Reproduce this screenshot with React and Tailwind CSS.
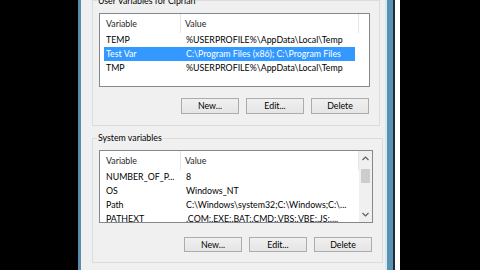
import React from 'react';

const font = { fontFamily: 'Lato, "Open Sans", sans-serif' };

function Header() {
  return (
    <div className="flex h-[19px] items-center text-[#1e1e1e]">
      <div className="w-[81px] pl-[6px] border-r border-[#e5e5e5] h-full flex items-center">Variable</div>
      <div className="w-[178px] pl-[4px] border-r border-[#e5e5e5] h-full flex items-center">Value</div>
    </div>
  );
}

function Row({ name, value, selected }) {
  return (
    <div className="h-[14px] flex items-center pl-[4px] whitespace-nowrap">
      <div
        className={
          'flex h-full items-center w-[251px] ' +
          (selected ? 'bg-[#3399ff] text-white' : 'text-black')
        }
      >
        <div className="w-[77px] pl-[2px] overflow-hidden">{name}</div>
        <div className="flex-1 pl-[5px] overflow-hidden">{value}</div>
      </div>
    </div>
  );
}

function Buttons({ h }) {
  const cls =
    'w-[58px] border border-[#acacac] bg-gradient-to-b from-[#f0f0f0] to-[#e5e5e5] flex items-center justify-center text-black ' +
    h;
  return (
    <div className="flex justify-end gap-[7px] pr-[1px]">
      <div className={cls}>New...</div>
      <div className={cls}>Edit...</div>
      <div className={cls}>Delete</div>
    </div>
  );
}

function Chevron({ up }) {
  return (
    <svg width="7" height="5" viewBox="0 0 7 5">
      <polyline
        points={up ? '0.5,4 3.5,1 6.5,4' : '0.5,1 3.5,4 6.5,1'}
        fill="none"
        stroke="#606060"
        strokeWidth="1.2"
      />
    </svg>
  );
}

export default function App() {
  const userRows = [
    ['TEMP', '%USERPROFILE%\\AppData\\Local\\Temp'],
    ['Test Var', 'C:\\Program Files (x86); C:\\Program Files', true],
    ['TMP', '%USERPROFILE%\\AppData\\Local\\Temp'],
  ];
  const sysRows = [
    ['NUMBER_OF_P...', '8'],
    ['OS', 'Windows_NT'],
    ['Path', 'C:\\Windows\\system32;C:\\Windows;C:\\...'],
    ['PATHEXT', '.COM;.EXE;.BAT;.CMD;.VBS;.VBE;.JS;....'],
  ];

  return (
    <div className="w-[480px] h-[270px] bg-black flex overflow-hidden text-[8.8px] leading-[12px]" style={font}>
      <div className="w-[78px] shrink-0" />
      <div className="w-[3px] shrink-0 bg-[#5a8cae]" />
      <div className="w-[304px] shrink-0 bg-[#f0f0f0] flex flex-col">
        <fieldset className="ml-[11px] w-[288px] -mt-[5px] border border-[#dcdcdc] pl-[6px] pr-[9px] pb-[11px]">
          <legend className="-ml-[2px] px-[1px] leading-[11px] text-black">User Variables for Ciprian</legend>
          <div className="mt-[7px] h-[74px] border border-[#828790] bg-white overflow-hidden">
            <Header />
            {userRows.map(([n, v, s]) => (
              <Row key={n} name={n} value={v} selected={s} />
            ))}
          </div>
          <div className="mt-[11px]">
            <Buttons h="h-[16px]" />
          </div>
        </fieldset>
        <fieldset className="ml-[11px] w-[288px] mt-[6px] border border-[#dcdcdc] pl-[6px] pr-[9px] pb-[10px]">
          <legend className="-ml-[2px] px-[1px] leading-[12px] text-black">System variables</legend>
          <div className="mt-[6px] h-[73px] border border-[#828790] bg-white overflow-hidden flex">
            <div className="flex-1 overflow-hidden">
              <Header />
              {sysRows.map(([n, v]) => (
                <Row key={n} name={n} value={v} />
              ))}
            </div>
            <div className="w-[13px] bg-[#f0f0f0] flex flex-col items-center">
              <div className="h-[13px] flex items-center justify-center mt-[1px]">
                <Chevron up />
              </div>
              <div className="w-[9px] h-[14px] mt-[4px] bg-[#cdcdcd]" />
              <div className="flex-1" />
              <div className="h-[13px] flex items-center justify-center mb-[1px]">
                <Chevron />
              </div>
            </div>
          </div>
          <div className="mt-[14px]">
            <Buttons h="h-[15px]" />
          </div>
        </fieldset>
      </div>
      <div className="w-[2px] shrink-0 bg-[#dbe8f1]" />
      <div className="w-[6px] shrink-0 bg-[#5a92b4]" />
      <div className="w-[2px] shrink-0 bg-[#1c2c3a]" />
      <div className="w-[5px] shrink-0 bg-white" />
    </div>
  );
}
